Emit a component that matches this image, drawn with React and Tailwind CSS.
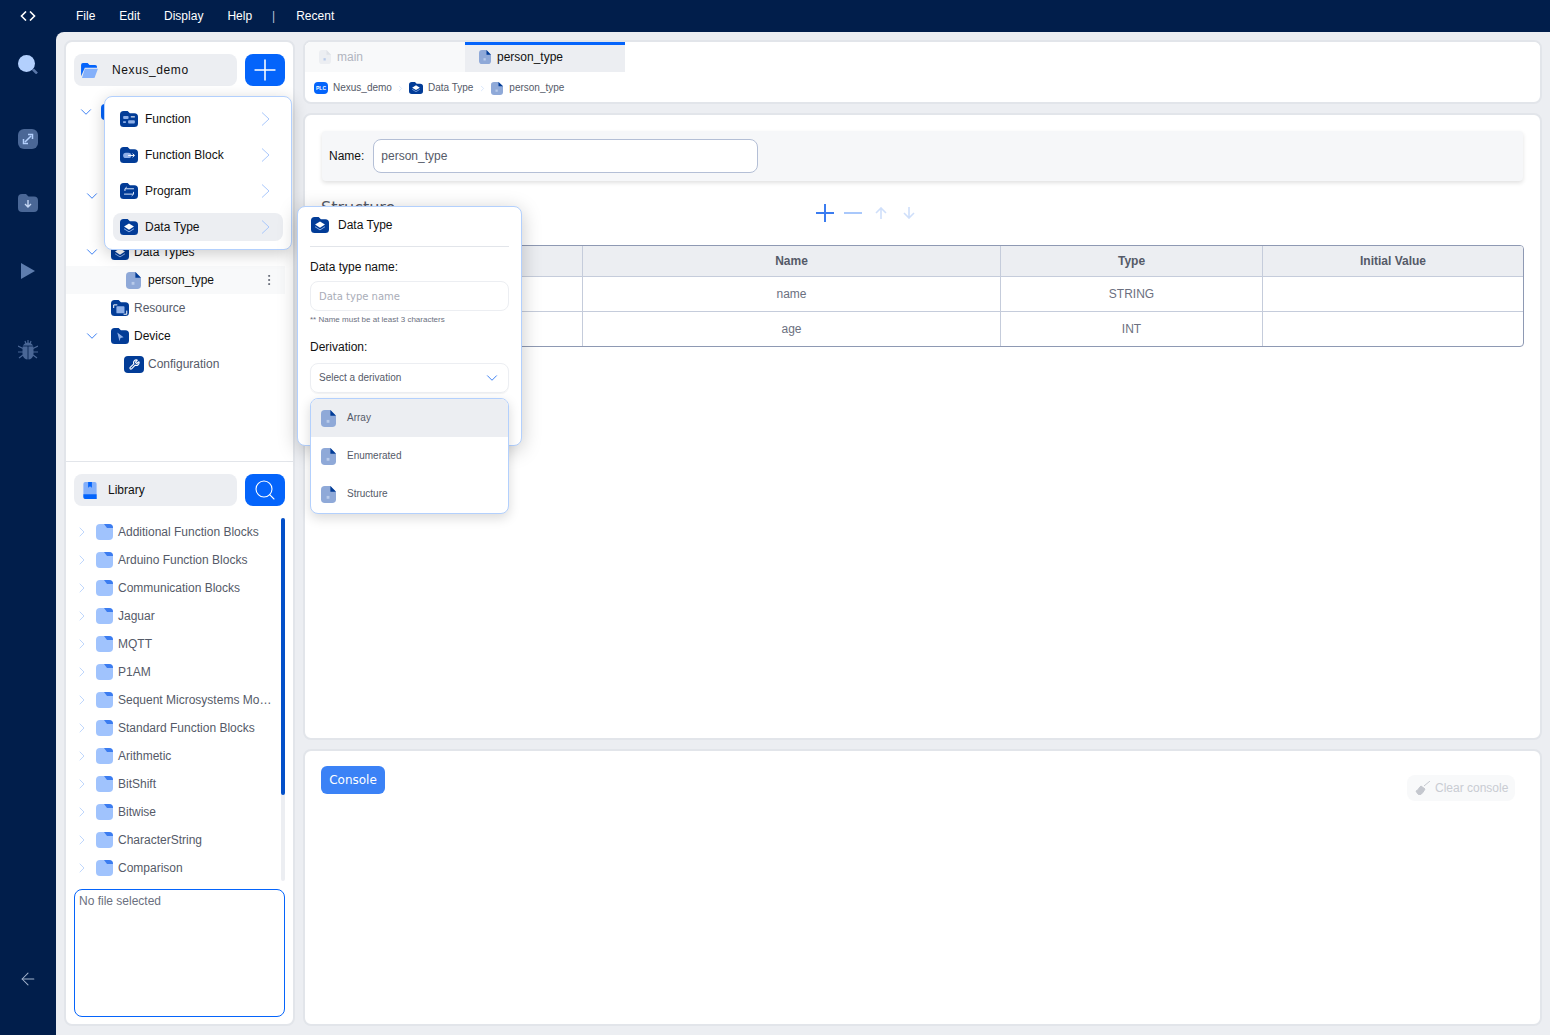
import { ChevronDown, ChevronRight, Plus, Search, Wrench, MoreVertical, ArrowLeft } from "lucide-react";

const libs = [
  "Additional Function Blocks",
  "Arduino Function Blocks",
  "Communication Blocks",
  "Jaguar",
  "MQTT",
  "P1AM",
  "Sequent Microsystems Mo…",
  "Standard Function Blocks",
  "Arithmetic",
  "BitShift",
  "Bitwise",
  "CharacterString",
  "Comparison",
];

function FolderIcon({ className = "w-[18px] h-[16px]", glyph }) {
  return (
    <svg viewBox="0 0 20 18" preserveAspectRatio="none" className={className}>
      <path d="M4 0h4.5l2.5 2.5h5a4 4 0 0 1 4 4V14a4 4 0 0 1-4 4H4a4 4 0 0 1-4-4V4a4 4 0 0 1 4-4z" fill="#023c97" />
      {glyph === "fn" && (
        <g fill="#8fb0e8">
          <rect x="3.5" y="5.5" width="6" height="3.5" rx="1" />
          <rect x="3.5" y="11.5" width="3" height="2" />
          <rect x="9" y="10.5" width="7.5" height="3.5" rx="1" />
          <rect x="12" y="6" width="4.5" height="1.2" fill="#fff" />
        </g>
      )}
      {glyph === "fb" && (
        <g>
          <rect x="3.5" y="6.5" width="9" height="6" rx="3" fill="#8fb0e8" />
          <path d="M9 9.5h7M14 7.5l2 2-2 2" stroke="#fff" strokeWidth="1.1" fill="none" />
        </g>
      )}
      {glyph === "prog" && (
        <path d="M15.5 6.5H5.5V9M5.5 6.5l2-2M4.5 12.5h10.5V10M15 12.5l-2 2" stroke="#dbe7fb" strokeWidth="1.1" fill="none" />
      )}
      {glyph === "data" && (
        <g>
          <path d="M10 5l5.5 3.5L10 12 4.5 8.5z" fill="#fff" />
          <path d="M4.5 11l5.5 3.5 5.5-3.5" stroke="#8fb0e8" strokeWidth="1.1" fill="none" />
        </g>
      )}
      {glyph === "res" && (
        <g>
          <rect x="6" y="7" width="9" height="8" rx="1" fill="#8fb0e8" />
          <path d="M3 9V5.5h4M17.5 12v4h-3.5" stroke="#fff" strokeWidth="1.1" fill="none" />
        </g>
      )}
      {glyph === "dev" && <path d="M7 5l7 5.5-3.5.7L9.5 15z" fill="#8fb0e8" />}
    </svg>
  );
}

function FileIcon({ className = "w-[16px] h-[18px]", fill = "#8fa9d8", corner = "#023c97" }) {
  return (
    <svg viewBox="0 0 16 18" preserveAspectRatio="none" className={className}>
      <path d="M4 0h6l6 6v8a4 4 0 0 1-4 4H4a4 4 0 0 1-4-4V4a4 4 0 0 1 4-4z" fill={fill} />
      <path d="M10 0l6 6h-6z" fill={corner} />
      <rect x="6" y="10.5" width="3" height="3" fill="#b9cbea" />
    </svg>
  );
}

function LibFolder() {
  return (
    <svg viewBox="0 0 17 16" className="w-[17px] h-[16px] shrink-0">
      <rect width="17" height="16" rx="4" fill="#a0c3fd" />
      <path d="M8 0h5a4 4 0 0 1 4 4H11z" fill="#3b7cf0" />
    </svg>
  );
}

function MenuRow({ glyph, label, active }) {
  return (
    <div className={`flex items-center h-[28px] rounded-lg pl-[7px] pr-[13px] ${active ? "bg-[#eceef2]" : ""}`}>
      <FolderIcon glyph={glyph} className="w-[18px] h-[16px] shrink-0" />
      <span className="ml-[7px] flex-1 text-xs text-[#111]">{label}</span>
      <svg viewBox="0 0 9 14" className="w-[9px] h-[14px]">
        <path d="M1 .5l7 6.5-7 6.5" stroke="#a9c8fb" strokeWidth="1" fill="none" />
      </svg>
    </div>
  );
}

function TreeRow({ indent, gap = "ml-[5px]", chevron, icon, label, dark, active }) {
  return (
    <div className={`relative flex items-center h-[28px] w-[219px] ${active ? "bg-[#f8f9fa]" : ""}`}>
      <div className="w-[20px] flex justify-center shrink-0 ml-[16px]">
        {chevron && <ChevronDown className="w-[18px] h-[18px] text-[#1667f0]" strokeWidth={1.1} />}
      </div>
      <div className={`flex items-center ${indent}`}>
        {icon}
        <span className={`text-xs ${gap} ${dark ? "text-[#111]" : "text-[#555a68]"}`}>{label}</span>
      </div>
      {active && <MoreVertical className="absolute right-[9px] w-[14px] h-[14px] text-[#555a68]" strokeWidth={1.5} />}
    </div>
  );
}

export default function App() {
  return (
    <div className="w-[1550px] h-[1035px] relative overflow-hidden bg-[#011e4b] font-['Liberation_Sans',sans-serif] text-xs flex flex-col">
      {/* top bar */}
      <div className="h-[32px] shrink-0 flex items-center text-white">
        <div className="w-[56px] flex justify-center">
          <svg viewBox="0 0 16 10" className="w-[16px] h-[10px]">
            <path d="M6 .5L1.5 5 6 9.5M10 .5L14.5 5 10 9.5" stroke="#fff" strokeWidth="1.6" fill="none" />
          </svg>
        </div>
        <div className="flex items-center ml-[20px]">
          <span>File</span>
          <span className="ml-[24px]">Edit</span>
          <span className="ml-[24px]">Display</span>
          <span className="ml-[24px]">Help</span>
          <span className="ml-[20px] text-[#b7c2d4]">|</span>
          <span className="ml-[21px]">Recent</span>
        </div>
      </div>

      <div className="flex flex-1 min-h-0">
        {/* activity bar */}
        <div className="w-[56px] shrink-0 flex flex-col items-center">
          <svg viewBox="0 0 20 19" className="w-[20px] h-[19px] mt-[23px]">
            <circle cx="8.5" cy="8.5" r="8.5" fill="#b3d0fd" />
            <path d="M15 14.5l4 4" stroke="#5a77a8" strokeWidth="2.5" />
          </svg>
          <div className="mt-[55px] w-[20px] h-[20px] rounded-md bg-[#4a6796] flex items-center justify-center">
            <svg viewBox="0 0 12 12" className="w-[12px] h-[12px]">
              <path d="M3 9l6-6M6 1.5h4.5V6M1.5 6v4.5H6" stroke="#b3d0fd" strokeWidth="1.5" fill="none" />
            </svg>
          </div>
          <svg viewBox="0 0 20 18" className="w-[20px] h-[18px] mt-[45px]">
            <path d="M4 0h4l2.500 2.500h5.500a4 4 0 0 1 4 4V14a4 4 0 0 1-4 4H4a4 4 0 0 1-4-4V4a4 4 0 0 1 4-4z" fill="#4a6796" />
            <path d="M10 6v7M7 10l3 3 3-3" stroke="#c6d8f5" strokeWidth="1.4" fill="none" />
          </svg>
          <svg viewBox="0 0 14 16" className="w-[14px] h-[16px] mt-[51px]">
            <path d="M0 0l14 8-14 8z" fill="#5e7dae" />
          </svg>
          <svg viewBox="0 0 20 20" className="w-[20px] h-[20px] mt-[61px]">
            <path d="M4.500 8a5.500 5.500 0 0 1 11 0v6a5.500 5.500 0 0 1-11 0z" fill="#4a6796" />
            <path d="M7 1l1 3M13 1l-1 3M10 0v3M0 6l5 2.500M20 6l-5 2.500M0 12h5M20 12h-5M1 18l4-3M19 18l-4-3" stroke="#4a6796" strokeWidth="1.2" />
            <path d="M10 6v14M4.500 6h11" stroke="#011e4b" strokeWidth=".8" />
          </svg>
          <ArrowLeft className="w-[20px] h-[20px] text-[#a3b3cc] mt-auto mb-[46px]" strokeWidth={1.25} />
        </div>

        {/* workspace */}
        <div className="flex-1 bg-[#eceef2] rounded-tl-lg flex gap-[8px] pl-[8px] pr-[8px] pt-[8px] pb-[9px]">
          {/* left panel */}
          <div className="w-[231px] shrink-0 bg-white rounded-lg border-2 border-[#e2e5ea] flex flex-col">
            <div className="h-[420px] border-b border-[#e2e5ea] shrink-0 flex flex-col">
              <div className="flex gap-[8px] px-[8px] pt-[12px]">
                <div className="w-[163px] h-[32px] rounded-lg bg-[#eceef2] flex items-center pl-[7px]">
                  <svg viewBox="0 0 18 16" className="w-[17px] h-[15px]">
                    <path d="M2 0h5l2 2h6a2 2 0 0 1 2 2v1H4L0 14V2a2 2 0 0 1 2-2z" fill="#0464fb" />
                    <path d="M4 6h14l-3 8a2 2 0 0 1-2 2H1z" fill="#84b0fa" />
                  </svg>
                  <span className="ml-[14px] text-[#111] tracking-[0.6px]">Nexus_demo</span>
                </div>
                <div className="w-[40px] h-[32px] rounded-lg bg-[#0464fb] flex items-center justify-center">
                  <Plus className="w-[34px] h-[34px] shrink-0 text-white" strokeWidth={1.1} />
                </div>
              </div>
              <div className="mt-[152px] flex flex-col">
                <TreeRow chevron icon={<FolderIcon glyph="data" />} label="Data Types" dark indent="ml-[9px]" />
                <TreeRow active icon={<FileIcon className="w-[15px] h-[17px]" />} gap="ml-[7px]" label="person_type" dark indent="ml-[24px]" />
                <TreeRow icon={<FolderIcon glyph="res" />} label="Resource" indent="ml-[9px]" />
                <TreeRow chevron icon={<FolderIcon glyph="dev" />} label="Device" dark indent="ml-[9px]" />
                <TreeRow
                  icon={
                    <div className="w-[20px] h-[17px] rounded-[4px] bg-[#023c97] flex items-center justify-center">
                      <Wrench className="w-[11px] h-[11px] text-white" strokeWidth={2.5} />
                    </div>
                  }
                  gap="ml-[4px]"
                  label="Configuration"
                  indent="ml-[22px]"
                />
              </div>
            </div>

            <div className="flex gap-[8px] px-[8px] pt-[12px]">
              <div className="w-[163px] h-[32px] rounded-lg bg-[#eceef2] flex items-center pl-[9px]">
                <svg viewBox="0 0 14 18" className="w-[14px] h-[17px]">
                  <path d="M2 0h10a2 2 0 0 1 2 2v16H2a2 2 0 0 1-2-2V2a2 2 0 0 1 2-2z" fill="#84b0fa" />
                  <path d="M0 13h14v5H2a2 2 0 0 1-2-2z" fill="#0464fb" />
                  <path d="M5 0h4v6L7 4.500 5 6z" fill="#0464fb" />
                </svg>
                <span className="ml-[11px] text-[#111]">Library</span>
              </div>
              <div className="w-[40px] h-[32px] rounded-lg bg-[#0464fb] flex items-center justify-center">
                <Search className="w-[24px] h-[24px] text-white" strokeWidth={1.1} />
              </div>
            </div>

            <div className="relative mt-[12px] h-[363px] overflow-hidden">
              {libs.map((l) => (
                <div key={l} className="flex items-center h-[28px] pl-[8px]">
                  <ChevronRight className="w-[16px] h-[16px] text-[#a9c8fb] shrink-0" strokeWidth={1.1} />
                  <div className="ml-[6px]">
                    <LibFolder />
                  </div>
                  <span className="ml-[5px] whitespace-nowrap text-[#555a68]">{l}</span>
                </div>
              ))}
              <div className="absolute left-[215px] top-0 bottom-0 w-[4px] rounded bg-[#eceef2]">
                <div className="h-[277px] rounded bg-[#0350c9]"></div>
              </div>
            </div>

            <div className="mx-[8px] mt-[8px] h-[128px] rounded-lg border border-[#0464fb] px-[4px] py-[3px] text-[#6b7080]">
              No file selected
            </div>
          </div>

          {/* right column */}
          <div className="flex-1 min-w-0 flex flex-col gap-[9px]">
            <div className="h-[64px] shrink-0 bg-white rounded-lg border-2 border-[#e2e5ea] flex flex-col overflow-hidden">
              <div className="flex h-[30px] shrink-0 bg-[#fff]">
                <div className="w-[160px] bg-[#f8f9fa] flex items-center pl-[14px]">
                  <FileIcon className="w-[12px] h-[14px]" fill="#eceef2" corner="#dfe2e7" />
                  <span className="ml-[6px] text-[#b1b5bf]">main</span>
                </div>
                <div className="w-[160px] bg-[#eceef2] border-t-[3px] border-[#0464fb] pb-[3px] flex items-center pl-[14px]">
                  <FileIcon className="w-[12px] h-[14px]" />
                  <span className="ml-[6px] text-[#111]">person_type</span>
                </div>
              </div>
              <div className="flex items-center h-[30px] pt-[2px] pl-[9px] text-[10px] text-[#555a68]">
                <div className="w-[14px] h-[12px] rounded-sm bg-[#0464fb] text-white text-[5px] font-bold flex items-center justify-center">PLC</div>
                <span className="ml-[5px]">Nexus_demo</span>
                <ChevronRight className="w-[9px] h-[9px] mx-[4px] text-[#cfdffa]" />
                <FolderIcon glyph="data" className="w-[14px] h-[12px]" />
                <span className="ml-[5px]">Data Type</span>
                <ChevronRight className="w-[9px] h-[9px] ml-[5px] mr-[4px] text-[#cfdffa]" />
                <FileIcon className="w-[12px] h-[13px]" />
                <span className="ml-[6px]">person_type</span>
              </div>
            </div>

            <div className="h-[627px] shrink-0 bg-white rounded-lg border-2 border-[#e2e5ea] px-[16px] pt-[16px]">
              <div className="h-[50px] mx-[1px] rounded bg-[#f6f7f9] shadow-[0_2px_4px_rgba(0,0,0,0.12)] flex items-center pl-[7px]">
                <span className="text-[#111]">Name:</span>
                <div className="ml-[9px] w-[385px] h-[34px] rounded-lg border border-[#b4bfd6] bg-white flex items-center pl-[7px] text-[#555a68]">person_type</div>
              </div>
              <div className="relative h-[64px]">
                <span className="absolute left-0 top-[15px] text-base text-[#555a68] font-['DejaVu_Sans',sans-serif]">Structure</span>
                <div className="absolute left-[495px] top-[23px] flex items-center">
                  <svg viewBox="0 0 18 18" className="w-[18px] h-[18px]">
                    <path d="M0 9h18M9 0v18" stroke="#3b7cf0" strokeWidth="2" />
                  </svg>
                  <svg viewBox="0 0 18 18" className="w-[18px] h-[18px] ml-[10px]">
                    <path d="M0 9h18" stroke="#a9c8fb" strokeWidth="2" />
                  </svg>
                  <svg viewBox="0 0 12 12" className="w-[12px] h-[12px] ml-[13px]">
                    <path d="M6 12V1M1 6l5-5 5 5" stroke="#cfdffa" strokeWidth="1.6" fill="none" />
                  </svg>
                  <svg viewBox="0 0 12 12" className="w-[12px] h-[12px] ml-[16px]">
                    <path d="M6 0v11M1 6l5 5 5-5" stroke="#cfdffa" strokeWidth="1.6" fill="none" />
                  </svg>
                </div>
              </div>
              <div className="border border-[#8e99b3] rounded overflow-hidden text-[#6b7080] text-center">
                <div className="grid grid-cols-[261px_418px_262px_1fr] h-[31px] bg-[#eceef2] font-bold text-[#555a68] border-b border-[#c5ccdb] items-center">
                  <div className="h-full border-r border-[#c5ccdb]"></div>
                  <div className="h-full flex items-center justify-center border-r border-[#c5ccdb]">Name</div>
                  <div className="h-full flex items-center justify-center border-r border-[#c5ccdb]">Type</div>
                  <div>Initial Value</div>
                </div>
                <div className="grid grid-cols-[261px_418px_262px_1fr] h-[35px] border-b border-[#c5ccdb] items-center">
                  <div className="h-full border-r border-[#c5ccdb]"></div>
                  <div className="h-full flex items-center justify-center border-r border-[#c5ccdb]">name</div>
                  <div className="h-full flex items-center justify-center border-r border-[#c5ccdb]">STRING</div>
                  <div></div>
                </div>
                <div className="grid grid-cols-[261px_418px_262px_1fr] h-[34px] items-center">
                  <div className="h-full border-r border-[#c5ccdb]"></div>
                  <div className="h-full flex items-center justify-center border-r border-[#c5ccdb]">age</div>
                  <div className="h-full flex items-center justify-center border-r border-[#c5ccdb]">INT</div>
                  <div></div>
                </div>
              </div>
            </div>

            <div className="flex-1 bg-white rounded-lg border-2 border-[#e2e5ea] px-[16px] pt-[15px] flex items-start justify-between">
              <div className="w-[64px] h-[28px] rounded-md bg-[#3b82f6] text-white flex items-center justify-center font-['DejaVu_Sans',sans-serif]">Console</div>
              <div className="mt-[9px] mr-[9px] w-[108px] h-[26px] rounded-lg bg-[#f8f9fa] flex items-center pl-[8px] text-[#c9ccd3]">
                <svg viewBox="0 0 16 14" className="w-[16px] h-[14px]">
                  <path d="M9 5L15 0M1 10c2 0 3-4 5-5l4 3c-1 2-3 5-5 6-2 0-3-2-4-4z" stroke="#c4c7ce" fill="#c4c7ce" strokeWidth="1" />
                </svg>
                <span className="ml-[4px]">Clear console</span>
              </div>
            </div>
          </div>
        </div>
      </div>

      {/* tree rows hidden behind the new-item menu */}
      <ChevronDown className="absolute left-[77px] top-[103px] w-[18px] h-[18px] text-[#1667f0]" strokeWidth={1.1} />
      <div className="absolute left-[101px] top-[104px] w-[8px] h-[16px] rounded-l bg-[#0464fb]"></div>
      <ChevronDown className="absolute left-[83px] top-[187px] w-[18px] h-[18px] text-[#1667f0]" strokeWidth={1.1} />

      {/* new-item menu */}
      <div className="absolute left-[104px] top-[96px] w-[188px] h-[154px] rounded-lg border border-[#b3d0fd] bg-white shadow-[0_4px_16px_rgba(0,0,0,0.2)] px-[8px] pt-[8px] flex flex-col gap-[8px]">
        <MenuRow glyph="fn" label="Function" />
        <MenuRow glyph="fb" label="Function Block" />
        <MenuRow glyph="prog" label="Program" />
        <MenuRow glyph="data" label="Data Type" active />
      </div>

      {/* data type form */}
      <div className="absolute left-[297px] top-[206px] w-[225px] h-[240px] rounded-lg border border-[#b3d0fd] bg-white shadow-[0_4px_20px_rgba(0,0,0,0.22)] px-[12px]">
        <div className="h-[40px] pb-[4px] flex items-center border-b border-[#e2e5ea]">
          <div className="ml-[1px]">
            <FolderIcon glyph="data" />
          </div>
          <span className="ml-[9px] text-[#111]">Data Type</span>
        </div>
        <div className="mt-[12px] text-[#111]">Data type name:</div>
        <div className="mt-[6px] h-[30px] pt-[2px] rounded-lg border border-[#eceef2] flex items-center pl-[8px] text-[10px] text-[#a9adb8] font-['DejaVu_Sans',sans-serif]">Data type name</div>
        <div className="mt-[4px] text-[8px] text-[#6b7080]">** Name must be at least 3 characters</div>
        <div className="mt-[13px] text-[#111]">Derivation:</div>
        <div className="mt-[8px] h-[30px] rounded-lg border border-[#eceef2] shadow-[0_1px_1px_rgba(0,0,0,0.05)] flex items-center justify-between pl-[8px] pr-[7px] text-[10px] text-[#555a68]">
          Select a derivation
          <ChevronDown className="w-[18px] h-[18px] text-[#1667f0]" strokeWidth={1.1} />
        </div>
      </div>

      {/* derivation dropdown */}
      <div className="absolute left-[310px] top-[398px] w-[199px] h-[116px] rounded-lg border border-[#b3d0fd] bg-white shadow-[0_4px_12px_rgba(0,0,0,0.15)] overflow-hidden text-[10px] text-[#555a68]">
        {["Array", "Enumerated", "Structure"].map((d, i) => (
          <div key={d} className={`h-[38px] flex items-center pl-[10px] ${i === 0 ? "bg-[#eceef2]" : ""}`}>
            <FileIcon className="w-[15px] h-[17px]" />
            <span className="ml-[11px]">{d}</span>
          </div>
        ))}
      </div>
    </div>
  );
}
